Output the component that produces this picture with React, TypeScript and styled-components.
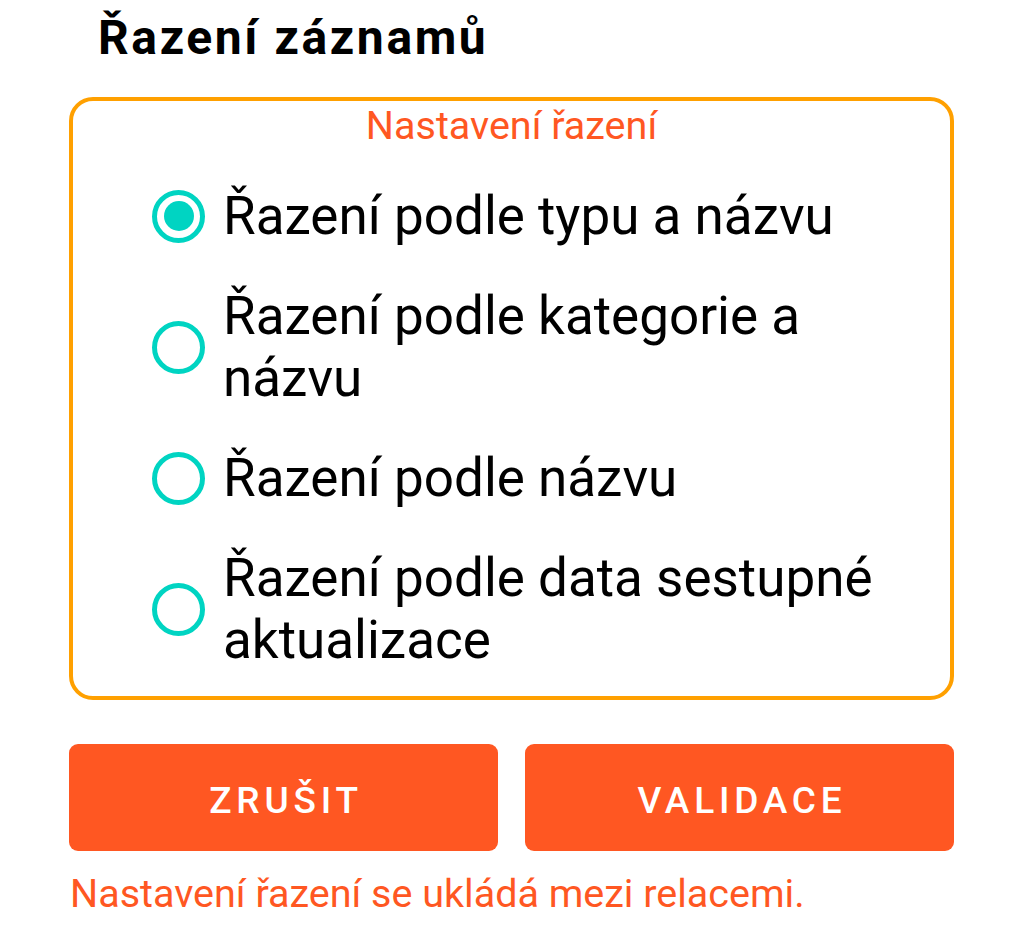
import { useState } from 'react';
import styled, { createGlobalStyle } from 'styled-components';

const GlobalStyle = createGlobalStyle`
  html, body {
    margin: 0;
    padding: 0;
    background: #fff;
  }
  body {
    font-family: Roboto, "Noto Sans", "Liberation Sans", sans-serif;
    -webkit-font-smoothing: antialiased;
  }
`;

const OPTIONS = [
  'Řazení podle typu a názvu',
  'Řazení podle kategorie a názvu',
  'Řazení podle názvu',
  'Řazení podle data sestupné aktualizace',
];

export default function App() {
  const [selected, setSelected] = useState(0);

  return (
    <>
      <GlobalStyle />
      <Page>
        <Title>Řazení záznamů</Title>

        <SortBox>
          <Legend>Nastavení řazení</Legend>
          <Options>
            {OPTIONS.map((label, i) => (
              <Option key={label} onClick={() => setSelected(i)}>
                <Radio $checked={selected === i} />
                <OptionLabel>{label}</OptionLabel>
              </Option>
            ))}
          </Options>
        </SortBox>

        <Actions>
          <ActionButton>Zrušit</ActionButton>
          <ActionButton>Validace</ActionButton>
        </Actions>

        <Hint>Nastavení řazení se ukládá mezi relacemi.</Hint>
      </Page>
    </>
  );
}

const Page = styled.div`
  display: flex;
  flex-direction: column;
  padding: 0 70px 0 69px;
  height: 934px;
  box-sizing: border-box;
`;

const Title = styled.h1`
  margin: 10px 0 0 29px;
  font-size: 48px;
  font-weight: 700;
  letter-spacing: 2.6px;
  line-height: 56px;
  color: #000;
`;

const SortBox = styled.div`
  margin-top: 31px;
  border: 4px solid #ffa000;
  border-radius: 24px;
  padding: 1px 40px 25px 79px;
`;

const Legend = styled.div`
  text-align: center;
  margin-left: -79px;
  margin-right: -40px;
  font-size: 39.5px;
  line-height: 47px;
  color: #ff5722;
`;

const Options = styled.div`
  display: flex;
  flex-direction: column;
  gap: 38px;
  margin-top: 36px;
`;

const Option = styled.label`
  display: flex;
  align-items: center;
  gap: 18px;
  cursor: pointer;
`;

const Radio = styled.span<{ $checked: boolean }>`
  flex: none;
  width: 53px;
  height: 53px;
  box-sizing: border-box;
  border: 5px solid #00d4c2;
  border-radius: 50%;
  display: flex;
  align-items: center;
  justify-content: center;

  &::after {
    content: '';
    display: ${(p) => (p.$checked ? 'block' : 'none')};
    width: 30px;
    height: 30px;
    border-radius: 50%;
    background: #00d4c2;
  }
`;

const OptionLabel = styled.span`
  font-size: 53px;
  line-height: 62px;
  color: #000;
`;

const Actions = styled.div`
  display: grid;
  grid-template-columns: 1fr 1fr;
  gap: 27px;
  margin-top: 44px;
`;

const ActionButton = styled.button`
  height: 107px;
  padding: 5px 0 0 5px;
  border: none;
  border-radius: 9px;
  background: #ff5722;
  color: #fff;
  font-family: Roboto, "Liberation Sans", sans-serif;
  font-size: 37px;
  font-weight: 500;
  letter-spacing: 4.8px;
  text-transform: uppercase;
  cursor: pointer;
`;

const Hint = styled.p`
  margin: 20px 0 0 1px;
  font-size: 39.5px;
  line-height: 46px;
  color: #ff5722;
`;
